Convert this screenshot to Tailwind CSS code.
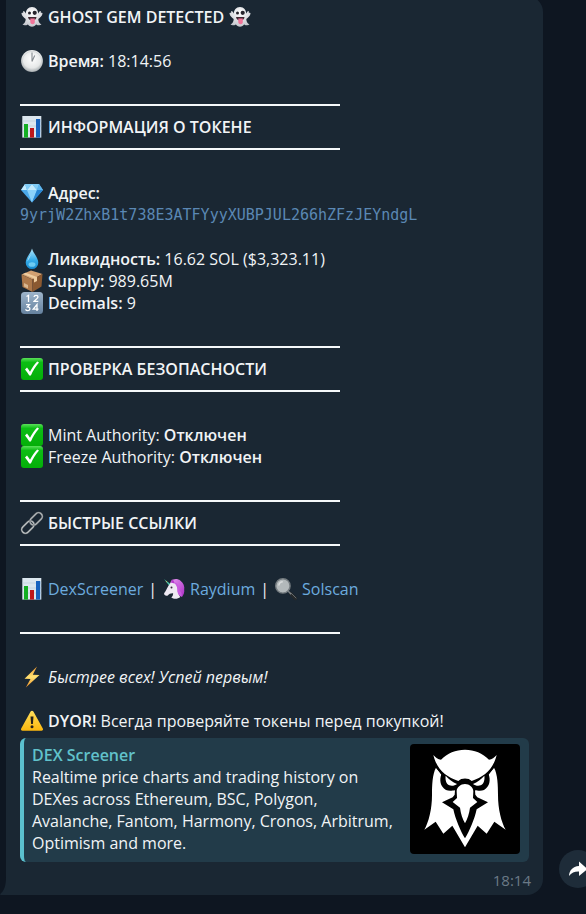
<!DOCTYPE html>
<html lang="ru" class="h-full bg-[#0e1621]">
<head>
    <meta charset="UTF-8">
    <meta name="viewport" content="width=device-width, initial-scale=1.0">
    <title>Ghost Gem Detected</title>
    <script src="https://cdn.jsdelivr.net/npm/@tailwindcss/browser@4"></script>
</head>
<body class="h-full overflow-hidden bg-[#0e1621] font-['Open_Sans','Noto_Sans',sans-serif] text-[16px] leading-[22px] text-[#f1f4f6]">

<!-- emoji set -->
<svg class="absolute size-0" aria-hidden="true">
    <defs>
        <linearGradient id="gGreen" x1="0" y1="0" x2="0" y2="1"><stop offset="0" stop-color="#5be05a"/><stop offset=".2" stop-color="#0cbd14"/><stop offset="1" stop-color="#04ae08"/></linearGradient>
        <linearGradient id="gKeys" x1="0" y1="0" x2="0" y2="1"><stop offset="0" stop-color="#9db4cb"/><stop offset="1" stop-color="#66829f"/></linearGradient>
        <linearGradient id="gDrop" x1="0" y1="0" x2="0" y2="1"><stop offset="0" stop-color="#b5e8fb"/><stop offset=".55" stop-color="#38aeea"/><stop offset="1" stop-color="#1689cf"/></linearGradient>
        <linearGradient id="gBolt" x1="0" y1="0" x2="0" y2="1"><stop offset="0" stop-color="#f3982a"/><stop offset=".5" stop-color="#ffe273"/><stop offset="1" stop-color="#ee8b22"/></linearGradient>
        <linearGradient id="gWarn" x1="0" y1="0" x2="0" y2="1"><stop offset="0" stop-color="#ffdf5c"/><stop offset="1" stop-color="#fbb70d"/></linearGradient>
        <linearGradient id="gMane" x1="0" y1="0" x2="1" y2="1"><stop offset="0" stop-color="#e79af0"/><stop offset="1" stop-color="#a92cc4"/></linearGradient>
        <radialGradient id="gClock" cx=".5" cy=".4" r=".6"><stop offset="0" stop-color="#fff"/><stop offset=".7" stop-color="#e6e8e8"/><stop offset="1" stop-color="#a5abae"/></radialGradient>
        <radialGradient id="gGhost" cx=".5" cy=".3" r=".7"><stop offset="0" stop-color="#fff"/><stop offset="1" stop-color="#c3c5cc"/></radialGradient>
    </defs>
    <symbol id="ghost" viewBox="0 0 24 24">
        <path fill="url(#gGhost)" d="M12 2c4 0 6 3 6.200 6.600.6-.8 1-2.400 2-2.600.8-.1.8 1.200.6 2 .9-.4 1.900-.1 1.700.8-.6 2.300-2.500 4.200-4.200 5.200.1 2.800.9 4.200 3.200 5.600-1.800 1.400-4.300.5-5.400-.2-.7 1.200-2.300 2.300-4.100 2.300s-3.400-1.100-4.100-2.300c-1.100.7-3.600 1.600-5.400.2 2.300-1.400 3.100-2.800 3.200-5.600C4 13 2.100 11.100 1.500 8.800c-.2-.9.8-1.200 1.700-.8-.2-.8-.2-2.100.6-2 1 .2 1.400 1.800 2 2.600C6 5 8 2 12 2z"/>
        <circle cx="9.500" cy="8" r="1.500" fill="#25232b"/><circle cx="14.700" cy="7.800" r="2.100" fill="#25232b"/>
        <path fill="#402932" d="M8 12h8.500c-.2 2-1.600 3.500-4.200 3.500S8.300 14 8 12z"/>
        <path fill="#f1759a" d="M10.300 13.500h4.500v3.800c0 2.500-4.500 2.500-4.500 0z"/>
    </symbol>
    <symbol id="clock" viewBox="0 0 24 24">
        <circle cx="12" cy="12" r="10.900" fill="url(#gClock)"/>
        <circle cx="12" cy="12" r="9.600" fill="none" stroke="#c3c7c9" stroke-width=".5"/>
        <path d="M12 12.500V3.500M12 12.500l2.700-6" stroke="#858b90" stroke-width="1.100" fill="none"/>
    </symbol>
    <symbol id="chart" viewBox="0 0 24 24">
        <path fill="#dce7ef" d="M2.300 1h19v21.600h-19z"/>
        <path stroke="#b8cad7" stroke-width=".6" d="M2.300 6h19M2.300 11h19M2.300 16h19"/>
        <path fill="#14ae23" d="M4 9h4v13.600H4z"/><path fill="#be171b" d="M10 13h4v9.600h-4z"/><path fill="#1763bf" d="M16 4h4.200v18.600H16z"/>
    </symbol>
    <symbol id="gem" viewBox="0 0 24 24">
        <path fill="#4ca9ea" d="M5 3h14l4 6-11 12.500L1 9z"/>
        <path fill="#c2eafd" d="M5 3 1 9h6zM12 3 7 9h10z"/><path fill="#81ccf6" d="M5 3h7L7 9zM12 3h7l-2 6z"/>
        <path fill="#5db5ee" d="m19 3 4 6h-6z"/><path fill="#8bd2fa" d="M7 9h10l-5 12.500z"/><path fill="#2785d2" d="M17 9h6L12 21.500z"/>
    </symbol>
    <symbol id="drop" viewBox="0 0 24 24">
        <path fill="url(#gDrop)" d="M12 1.500c1 4.500 6.300 9 6.300 14.200a6.300 6.300 0 0 1-12.600 0C5.700 10.500 11 6 12 1.500z"/>
        <ellipse cx="12" cy="17.500" rx="3.500" ry="2.300" fill="#8be0fb" opacity=".7"/>
        <path fill="#fff" opacity=".6" d="M10.700 7.500c-2 3-3.200 4.700-3.200 7 1-2 2.600-4 3.200-7z"/>
    </symbol>
    <symbol id="box" viewBox="0 0 24 24">
        <path fill="#d2a071" d="m1.500 5.500 9.500-4 11.500 3.500-10 5.500z"/>
        <path fill="#ad784a" d="m1.500 5.500 11 5v12.500L2.500 18z"/><path fill="#8b5931" d="m12.500 10.500 10-5.500-1 12.500-9 5.500z"/>
        <path fill="#efcda0" d="m5.700 3.700 11.300 4.300v4l-3 1.600v-4L3 5z"/>
        <path fill="#d9b68f" d="m4 14 4 2v3.500l-4-2z"/>
    </symbol>
    <symbol id="keys" viewBox="0 0 24 24">
        <rect x="1" y="1" width="22" height="22" rx="3.500" fill="url(#gKeys)"/>
        <g fill="none" stroke="#fff" stroke-width="1.300">
            <path d="m6.500 5.500 2-1.200V11M14 6c.3-2.200 4-2.200 4 0 0 1.600-3 2.700-4 4.400h4.300"/>
            <path d="M6 13.600h3.500l-2 2.300c3.300 0 3 3.700.2 3.700-1 0-1.700-.4-2.200-1.200M17 20v-6.500l-3.800 4.600h5.300"/>
        </g>
    </symbol>
    <symbol id="check" viewBox="0 0 24 24">
        <rect x="1" y="1" width="22" height="22" rx="3" fill="url(#gGreen)"/>
        <path fill="#fff" d="M5 12.400 7 10.500c1 1.300 2 2.600 3 4.300 2-4 4.400-7.400 7.200-10.300l1.800 1C15.300 9.800 12.700 14 10.900 18.600H9.300C8 16.200 6.700 14.200 5 12.400z"/>
    </symbol>
    <symbol id="chain" viewBox="0 0 24 24">
        <g transform="rotate(-45 12 12)" fill="none">
            <rect x="-1" y="8.300" width="14.300" height="7.400" rx="3.700" stroke="#6c7174" stroke-width="2"/>
            <rect x="-1" y="8.300" width="14.300" height="7.400" rx="3.700" stroke="#c6cbcd" stroke-width="1"/>
            <rect x="10.700" y="8.300" width="14.300" height="7.400" rx="3.700" stroke="#6c7174" stroke-width="2"/>
            <rect x="10.700" y="8.300" width="14.300" height="7.400" rx="3.700" stroke="#b7bcbf" stroke-width="1"/>
        </g>
    </symbol>
    <symbol id="unicorn" viewBox="0 0 24 24">
        <path fill="#4ac7ab" d="m2 2 7 5.500L7.500 9z"/><path fill="#f0d25c" d="m3.600 3.700 1.500 1.100-.6.700z"/>
        <path fill="url(#gMane)" d="M9 4c2-2.300 6.500-3 9.200-.5 3.300 2.500 4.600 6 4 9.300.4 2.500-.5 5-2.200 7.200L11 14 8 7z"/>
        <path fill="#eee9f2" d="M9 5.500c3.800-.4 6 2.400 6.300 6 .2 3.500 1.200 6.500 3 8.500-2.500 2.200-6.500 2.300-9 .5 1.400-1.300 1.900-3 1.800-4.300-2.400-.2-3.800.6-5.300 2.200-1.800 1-4-.4-3.700-2.200C4 14 5 11 6.600 8.500z"/>
        <path fill="#b43ccc" d="m9 5.600 1-3.400c1.600 1 2.300 2.300 2.500 4.200z"/><path fill="#c95be0" d="M12 5.500c3.700.4 6 4 5.500 8 2 1.500 2.600 4 2 6.300-3.200-1.400-4.600-4.500-4-7.600-.3-2.700-1.500-5-3.500-6.700z"/>
        <circle cx="9.500" cy="10.500" r="1" fill="#39273f"/>
    </symbol>
    <symbol id="lens" viewBox="0 0 24 24">
        <path stroke="#26292b" stroke-width="3.200" stroke-linecap="round" d="m16.500 16.500 5 5"/><path stroke="#80868a" stroke-width="1.400" d="m14 14 3.200 3.200"/>
        <path stroke="#6a7074" stroke-width=".9" stroke-linecap="round" d="m17 16 5 5"/>
        <circle cx="8.900" cy="8.900" r="7.200" fill="#b3b9bb" stroke="#757c80" stroke-width="1.400"/>
        <path d="M4.800 8.500c.3-2.200 2-3.600 4-3.700" fill="none" stroke="#d9dcdd" stroke-width="1.500"/>
    </symbol>
    <symbol id="bolt" viewBox="0 0 24 24">
        <path fill="url(#gBolt)" d="M17 1.500 4.500 13.700l6 .4L5.800 22.500 19.500 10l-6.700-.3z"/>
    </symbol>
    <symbol id="warn" viewBox="0 0 24 24">
        <path fill="url(#gWarn)" d="M10.600 2.600c.6-1.200 2.200-1.200 2.800 0l9.400 16.800c.6 1.200 0 2.300-1.300 2.300h-19c-1.300 0-1.900-1.100-1.300-2.300z"/>
        <path fill="#26211b" d="M10.500 7.500h3l-.6 7.500h-1.800z"/><circle cx="12" cy="17.700" r="1.500" fill="#26211b"/>
    </symbol>
</svg>

<main class="flex items-end pl-[6px]">
    <article class="relative -mt-1 min-w-0 flex-1 rounded-r-2xl bg-[#1a2733] px-[14px] pt-[10px] pb-[4px]">
        <svg class="absolute bottom-0 -left-[6px] h-[18px] w-[6px]" viewBox="0 0 6 18" aria-hidden="true"><path fill="#1a2733" d="M6 0v18H1c-1 0-1.200-.8-.5-1.300C4 14 6 9 6 0z"/></svg>

        <h1 class="flex items-center gap-1 font-semibold">
            <svg class="-my-px size-6 shrink-0"><use href="#ghost"/></svg>GHOST GEM DETECTED<svg class="-my-px size-6 shrink-0"><use href="#ghost"/></svg>
        </h1>
        <p class="mt-[22px] flex items-center gap-1">
            <svg class="-my-px size-6 shrink-0"><use href="#clock"/></svg><span><b class="font-semibold">Время:</b> 18:14:56</span>
        </p>

        <section class="mt-[22px]">
            <div class="flex h-[22px] items-center"><hr class="w-80 border-t-2 border-[#f5f8fa]"></div>
            <h2 class="flex items-center gap-1 font-semibold"><svg class="-my-px size-6 shrink-0"><use href="#chart"/></svg>ИНФОРМАЦИЯ О ТОКЕНЕ</h2>
            <div class="flex h-[22px] items-center"><hr class="w-80 border-t-2 border-[#f5f8fa]"></div>
            <p class="mt-[22px] flex items-center gap-1 font-semibold"><svg class="-my-px size-6 shrink-0"><use href="#gem"/></svg>Адрес:</p>
            <code class="block font-['DejaVu_Sans_Mono',monospace] text-[15px] break-all text-[#5b88b4]">9yrjW2ZhxB1t738E3ATFYyyXUBPJUL266hZFzJEYndgL</code>
            <p class="mt-[22px] flex items-center gap-1"><svg class="-my-px size-6 shrink-0"><use href="#drop"/></svg><span><b class="font-semibold">Ликвидность:</b> 16.62 SOL ($3,323.11)</span></p>
            <p class="flex items-center gap-1"><svg class="-my-px size-6 shrink-0"><use href="#box"/></svg><span><b class="font-semibold">Supply:</b> 989.65M</span></p>
            <p class="flex items-center gap-1"><svg class="-my-px size-6 shrink-0"><use href="#keys"/></svg><span><b class="font-semibold">Decimals:</b> 9</span></p>
        </section>

        <section class="mt-[22px]">
            <div class="flex h-[22px] items-center"><hr class="w-80 border-t-2 border-[#f5f8fa]"></div>
            <h2 class="flex items-center gap-1 font-semibold"><svg class="-my-px size-6 shrink-0"><use href="#check"/></svg>ПРОВЕРКА БЕЗОПАСНОСТИ</h2>
            <div class="flex h-[22px] items-center"><hr class="w-80 border-t-2 border-[#f5f8fa]"></div>
            <p class="mt-[22px] flex items-center gap-1"><svg class="-my-px size-6 shrink-0"><use href="#check"/></svg><span>Mint Authority: <b class="font-semibold">Отключен</b></span></p>
            <p class="flex items-center gap-1"><svg class="-my-px size-6 shrink-0"><use href="#check"/></svg><span>Freeze Authority: <b class="font-semibold">Отключен</b></span></p>
        </section>

        <section class="mt-[22px]">
            <div class="flex h-[22px] items-center"><hr class="w-80 border-t-2 border-[#f5f8fa]"></div>
            <h2 class="flex items-center gap-1 font-semibold"><svg class="-my-px size-6 shrink-0"><use href="#chain"/></svg>БЫСТРЫЕ ССЫЛКИ</h2>
            <div class="flex h-[22px] items-center"><hr class="w-80 border-t-2 border-[#f5f8fa]"></div>
            <p class="mt-[22px] flex items-center gap-1">
                <svg class="-my-px size-6 shrink-0"><use href="#chart"/></svg><a href="#" class="text-[#6cabdf]">DexScreener</a>
                <span class="px-px">|</span>
                <svg class="-my-px size-6 shrink-0"><use href="#unicorn"/></svg><a href="#" class="text-[#6cabdf]">Raydium</a>
                <span class="px-px">|</span>
                <svg class="-my-px size-6 shrink-0"><use href="#lens"/></svg><a href="#" class="text-[#6cabdf]">Solscan</a>
            </p>
            <div class="mt-[22px] flex h-[22px] items-center"><hr class="w-80 border-t-2 border-[#f5f8fa]"></div>
        </section>

        <p class="mt-[22px] flex items-center gap-1"><svg class="-my-px size-6 shrink-0"><use href="#bolt"/></svg><i>Быстрее всех! Успей первым!</i></p>
        <p class="mt-[22px] flex items-center gap-1"><svg class="-my-px size-6 shrink-0"><use href="#warn"/></svg><span><b class="font-semibold">DYOR!</b> Всегда проверяйте токены перед покупкой!</span></p>

        <!-- link preview -->
        <a href="#" class="mt-[6px] flex gap-2 rounded-md border-l-4 border-[#5bc1cf] bg-[#223b49] pt-[6px] pr-[9px] pb-2 pl-2">
            <span class="min-w-0 flex-1">
                <span class="block font-semibold text-[#61c2cb]">DEX Screener</span>
                <span class="block">Realtime price charts and trading history on DEXes across Ethereum, BSC, Polygon, Avalanche, Fantom, Harmony, Cronos, Arbitrum, Optimism and more.</span>
            </span>
            <svg class="size-[110px] shrink-0 rounded bg-black" viewBox="0 0 330 330" role="img" aria-label="DEX Screener">
                <path fill="#fff" d="M78 71C67 90 66 125 66 153C66 195 56 235 43 257L77 233L100 269L127 245L165 310L203 245L230 269L253 233L287 257C274 235 264 195 264 153C264 125 263 90 252 71L235 93H95Z"/>
                <path fill="#000" d="M78 55V71L94 91C88 108 90 128 108 138C116 142 128 140 135 139L134 152L128 160L96 175L130 196C136 225 152 262 165 283C178 262 194 225 200 196L234 175L202 160L196 152L195 139C202 140 214 142 222 138C240 128 242 108 236 91L252 71V55Z"/>
                <path fill="#fff" d="M70 33C77 41 84 46 93 47C112 27 137 17 165 17C193 17 218 27 237 47C246 46 253 41 260 33C249 78 222 98 185 111C176 101 154 101 145 111C108 98 81 78 70 33Z"/>
                <path fill="#fff" d="M165 120C178 120 190 130 190 142L189 162L202 174L180 191C178 209 172 225 165 238C158 225 152 209 150 191L128 174L141 162L140 142C140 130 152 120 165 120Z"/>
                <path fill="#fff" d="M107 95C116 106 128 114 141 120C135 125 125 127 118 124C109 120 105 108 107 95ZM223 95C214 106 202 114 189 120C195 125 205 127 212 124C221 120 225 108 223 95Z"/>
            </svg>
        </a>
        <time datetime="18:14" class="-mr-[2px] mt-[7px] block text-right text-[15px] text-[#6b7a87]">18:14</time>
    </article>

    <button type="button" aria-label="Переслать" class="-mr-[11px] mb-[7px] ml-4 flex size-[38px] shrink-0 items-center justify-center rounded-full bg-[#1e2c39]">
        <svg class="size-5" viewBox="0 0 20 20" aria-hidden="true"><path fill="#fff" d="M11 2.500 19.500 10 11 17v-4.500C7 12.300 3.500 13.500 1 17c.3-5.500 3.500-9.500 10-10z"/></svg>
    </button>
</main>
</body>
</html>
